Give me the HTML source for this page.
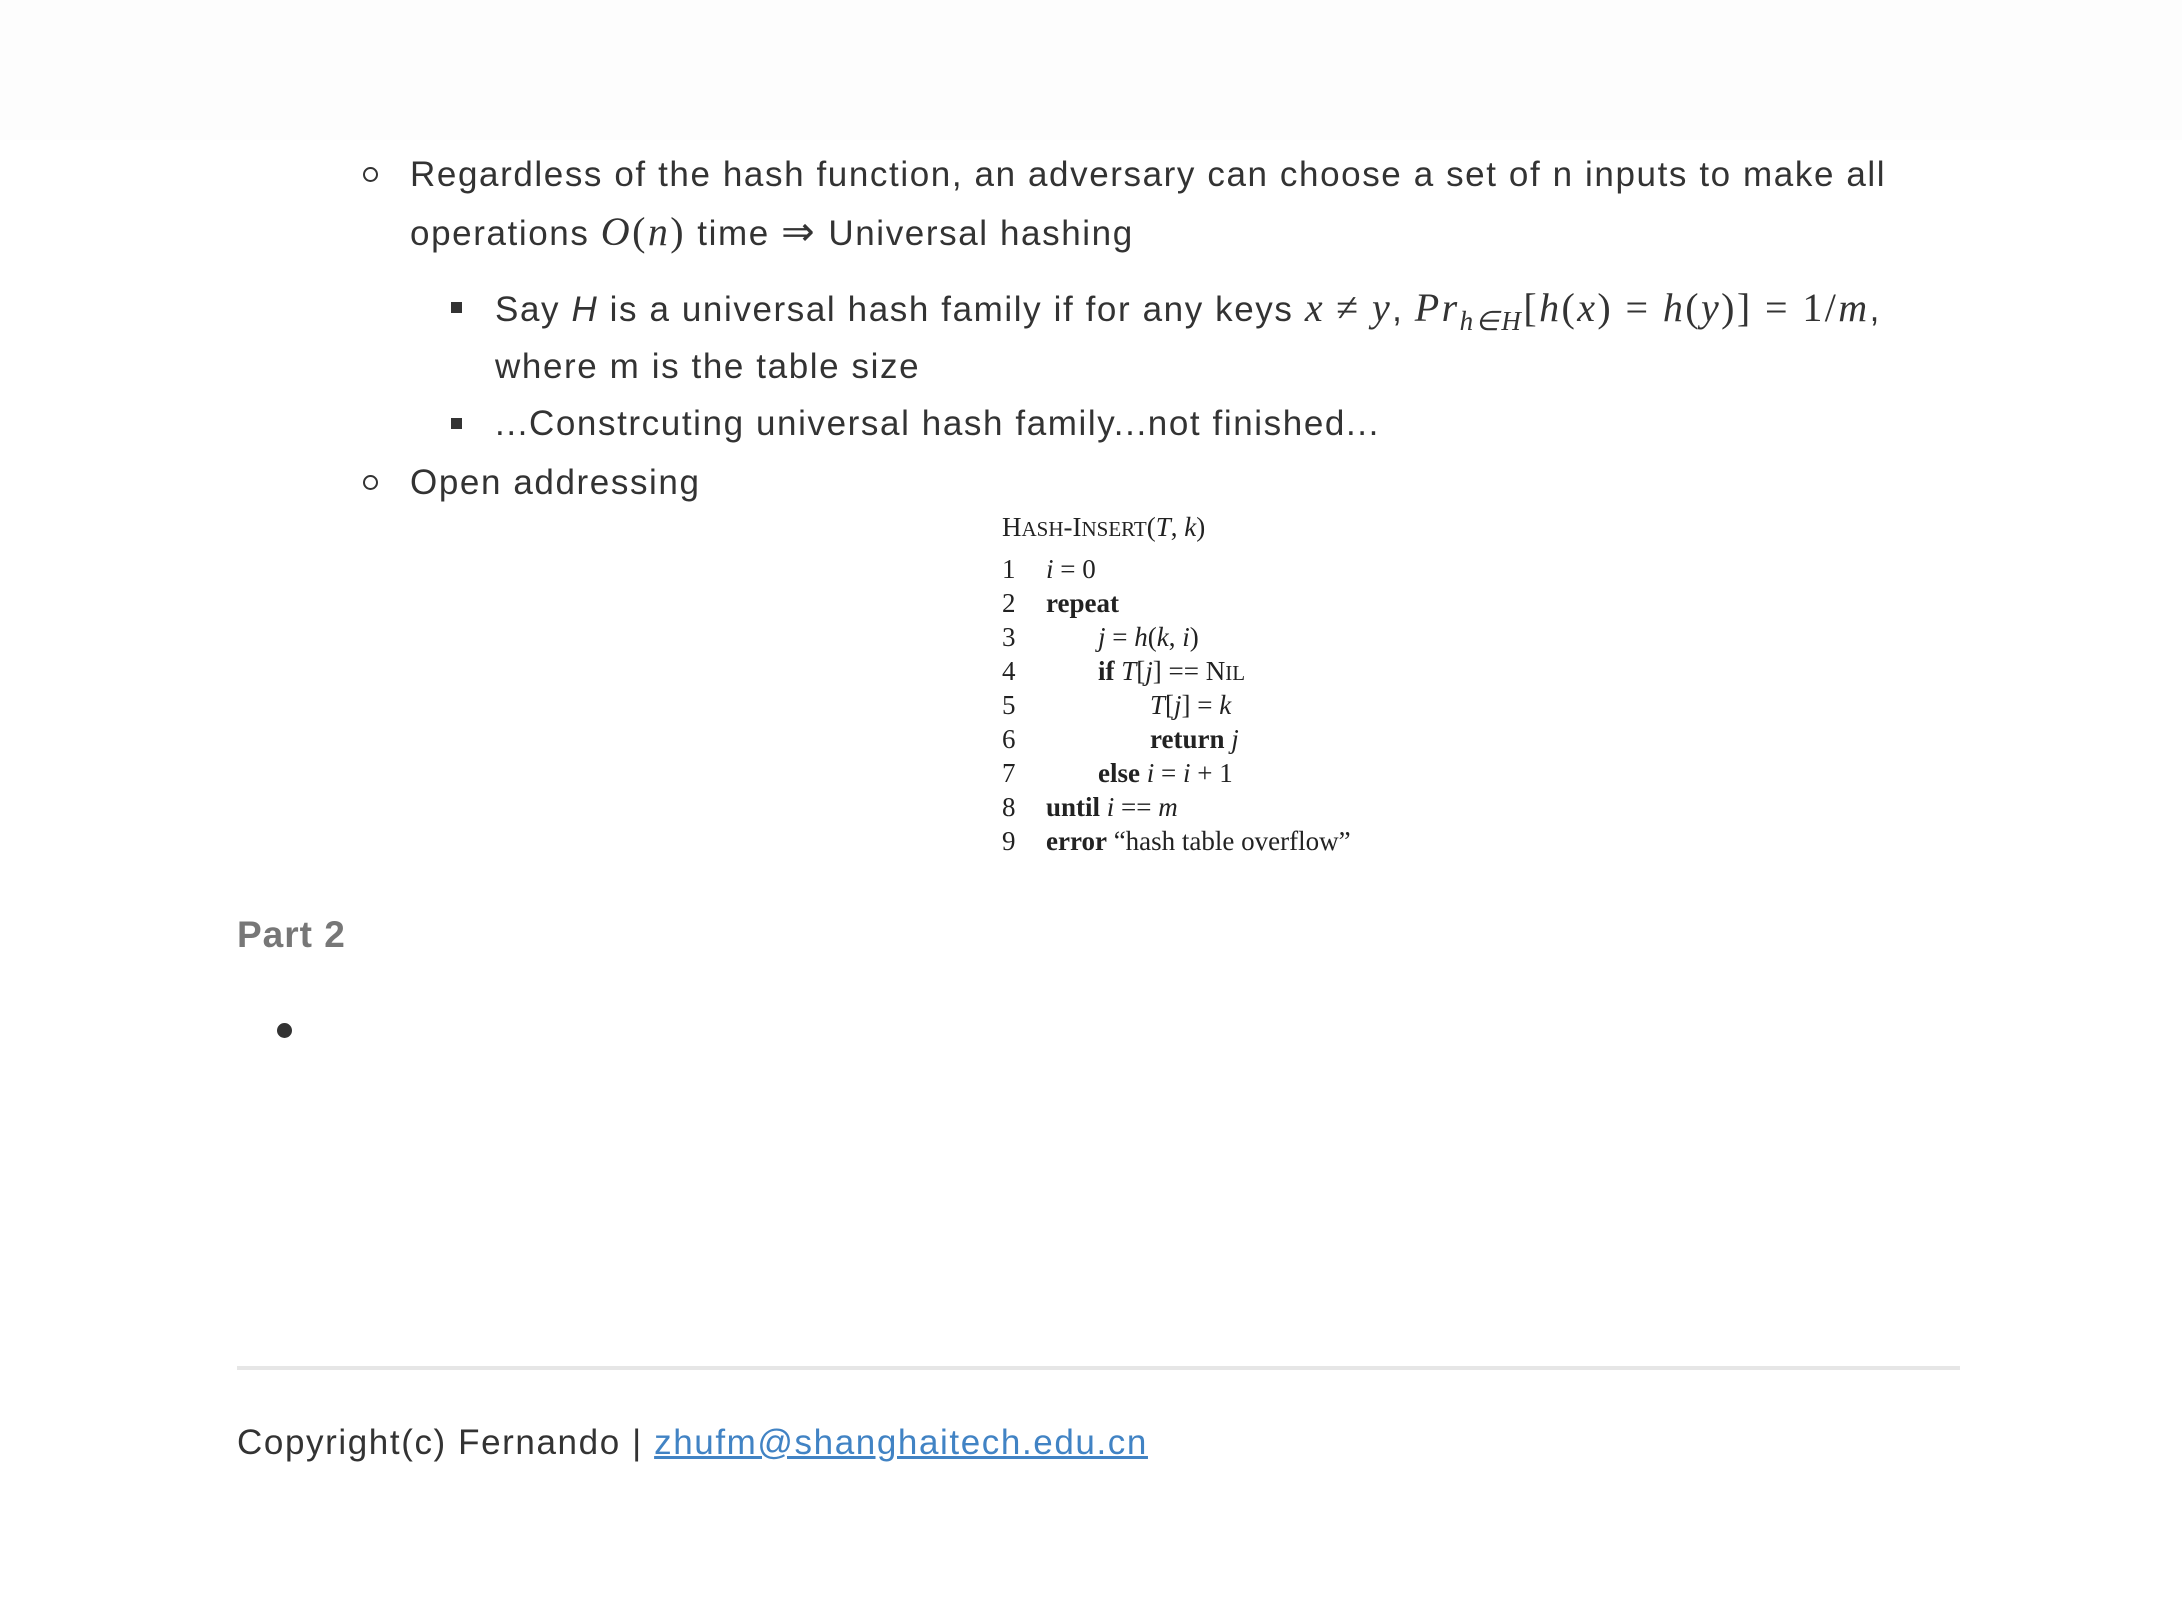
<!DOCTYPE html>
<html><head><meta charset="utf-8"><style>
html,body{margin:0;padding:0;background:#fff;}
body{width:2182px;height:1602px;position:relative;overflow:hidden;font-family:"Liberation Sans",sans-serif;color:#333;}
.t{position:absolute;white-space:nowrap;font-size:35px;line-height:40px;letter-spacing:1.6px;}
.m{font-family:"Liberation Serif",serif;font-style:italic;font-size:40px;letter-spacing:2.4px;}
.r{font-family:"Liberation Serif",serif;font-size:40px;letter-spacing:2.4px;}
.circ{position:absolute;width:11px;height:11px;border:2.5px solid #333;border-radius:50%;}
.sq{position:absolute;width:11px;height:11px;background:#333;}
.alg{position:absolute;left:1002px;top:512px;font-family:"Liberation Serif",serif;color:#222;font-size:27px;}
.alg div{position:absolute;white-space:nowrap;}
b{font-weight:bold;}
i{font-style:italic;}
</style></head><body>
<div style="position:absolute;left:0;top:0;width:2182px;height:140px;background:#fdfdfd"></div>
<div class="circ" style="left:363px;top:167px"></div>
<div class="t" style="left:410px;top:155px">Regardless of the hash function, an adversary can choose a set of n inputs to make all</div>
<div class="t" style="left:410px;top:212px">operations <span class="m">O</span><span class="r">(</span><span class="m">n</span><span class="r">)</span> time <span class="r">⇒</span> Universal hashing</div>
<div class="sq" style="left:451px;top:302px"></div>
<div class="t" style="left:495px;top:288px">Say <i>H</i> is a universal hash family if for any keys <span class="m">x</span> <span class="r">≠</span> <span class="m">y</span>, <span class="m">Pr<sub style="font-size:27px">h∈H</sub></span><span class="r">[</span><span class="m">h</span><span class="r">(</span><span class="m">x</span><span class="r">) = </span><span class="m">h</span><span class="r">(</span><span class="m">y</span><span class="r">)] = 1/</span><span class="m">m</span>,</div>
<div class="t" style="left:495px;top:347px">where m is the table size</div>
<div class="sq" style="left:451px;top:418px"></div>
<div class="t" style="left:495px;top:404px">...Constrcuting universal hash family...not finished...</div>
<div class="circ" style="left:363px;top:475px"></div>
<div class="t" style="left:410px;top:463px">Open addressing</div>
<div class="alg">
<div style="left:0;top:0">H<span style="font-size:21px">ASH</span>-I<span style="font-size:21px">NSERT</span>(<i>T</i>, <i>k</i>)</div>
<div style="left:0;top:42px">1</div><div style="left:44px;top:42px"><i>i</i> = 0</div>
<div style="left:0;top:76px">2</div><div style="left:44px;top:76px"><b>repeat</b></div>
<div style="left:0;top:110px">3</div><div style="left:96px;top:110px"><i>j</i> = <i>h</i>(<i>k</i>, <i>i</i>)</div>
<div style="left:0;top:144px">4</div><div style="left:96px;top:144px"><b>if</b> <i>T</i>[<i>j</i>] == N<span style="font-size:21px">IL</span></div>
<div style="left:0;top:178px">5</div><div style="left:148px;top:178px"><i>T</i>[<i>j</i>] = <i>k</i></div>
<div style="left:0;top:212px">6</div><div style="left:148px;top:212px"><b>return</b> <i>j</i></div>
<div style="left:0;top:246px">7</div><div style="left:96px;top:246px"><b>else</b> <i>i</i> = <i>i</i> + 1</div>
<div style="left:0;top:280px">8</div><div style="left:44px;top:280px"><b>until</b> <i>i</i> == <i>m</i></div>
<div style="left:0;top:314px">9</div><div style="left:44px;top:314px"><b>error</b> “hash table overflow”</div>
</div>
<div class="t" style="left:237px;top:915px;font-weight:bold;color:#777;font-size:37px;letter-spacing:1px">Part 2</div>
<div style="position:absolute;left:277px;top:1023px;width:15px;height:15px;border-radius:50%;background:#333"></div>
<div style="position:absolute;left:237px;top:1366px;width:1723px;height:4px;background:#e6e6e6"></div>
<div class="t" style="left:237px;top:1423px">Copyright(c) Fernando | <span style="color:#4183c4;text-decoration:underline">zhufm@shanghaitech.edu.cn</span></div>
</body></html>
